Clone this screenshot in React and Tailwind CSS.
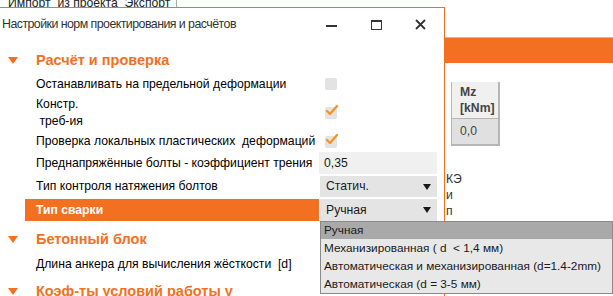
import React from 'react'

const ORANGE = '#f37021'

const Tri = () => (
  <svg width="10" height="7" viewBox="0 0 10 7" className="block">
    <path d="M0 0 H10 L5 7 Z" fill={ORANGE} />
  </svg>
)

const Check = ({ checked }) => (
  <div className="relative w-[12px] h-[12px] rounded-[2px] bg-[#e3e3e3]">
    {checked && (
      <svg width="14" height="12" viewBox="0 0 14 12" className="absolute left-[0px] top-[-3px]">
        <path d="M2 7 L5 10 L12 2" stroke="#f7931e" strokeWidth="2.2" fill="none" strokeLinecap="round" strokeLinejoin="round" />
      </svg>
    )}
  </div>
)

const Arrow = () => (
  <svg width="8" height="6" viewBox="0 0 8 6" className="block">
    <path d="M0 0 H8 L4 6 Z" fill="#1a1a1a" />
  </svg>
)

const Section = ({ title, className = '' }) => (
  <div className={`flex items-center h-[26px] ${className}`}>
    <div className="w-[36px] pl-[8px]"><Tri /></div>
    <span className="text-[14.5px] font-bold text-[#f37021] whitespace-nowrap">{title}</span>
  </div>
)

const Row = ({ label, h = 'h-[20px]', children, active }) => (
  <div className={`flex items-center ${h}`}>
    <div className={`flex items-center ml-[25px] pl-[11px] w-[294px] self-stretch whitespace-pre ${active ? 'bg-[#f37021] text-white font-bold' : 'text-black'}`}>
      {label}
    </div>
    <div className="w-[118px] flex items-center self-stretch">{children}</div>
  </div>
)

const Select = ({ value }) => (
  <div className="flex items-center justify-between w-[117px] h-full ml-[1px] pl-[6px] pr-[6px] bg-[#e4e4e4] text-[#1a1a1a]">
    <span>{value}</span>
    <Arrow />
  </div>
)

export default function App() {
  return (
    <div className="relative w-[613px] h-[296px] overflow-hidden bg-white text-[12.2px] leading-[17px]" style={{ fontFamily: '"Liberation Sans", Arial, sans-serif' }}>
      {/* background app */}
      <div className="flex flex-col">
        <div className="h-[7px] overflow-hidden relative">
          <div className="flex items-end h-[7px] text-[#222] pl-[8px]">
            <span className="whitespace-pre leading-[13px] mb-[-3px]">Импорт  из проекта  Экспорт</span>
          </div>
          <div className="absolute left-[176px] top-0 w-[1px] h-[7px] bg-[#aaa]" />
        </div>
        <div className="h-[30px]" />
        <div className="h-[1px] bg-[#bdbdbd]" />
        <div className="h-[25px] bg-[#f37021]" />
        <div className="h-[19px]" />
        <div className="ml-[451px] w-[49px] border-r-2 border-b-2 border-[#b5b5b5] text-[#444]">
          <div className="bg-[#f0f0f0] px-[8px] pt-[2px] pb-[2px] font-bold leading-[16px] border-l border-[#b5b5b5]">Mz<br />[kNm]</div>
          <div className="bg-[#e0e0e0] px-[8px] h-[26px] flex items-center border-t border-l border-[#b5b5b5]">0,0</div>
        </div>
        <div className="ml-[446px] mt-[25px] text-[#333] leading-[16px]">
          <div>КЭ</div>
          <div>и</div>
          <div>п</div>
        </div>
        <div className="mt-[6px] h-[10px] bg-[#a9a9a9]" />
      </div>

      {/* dialog window */}
      <div className="absolute left-0 top-[7px] w-[445px] h-[300px] bg-white border-t border-r border-[#f37021] flex flex-col">
        <div className="flex items-center h-[33px]">
          <span className="pl-[2px] text-[#333] text-[12.4px] tracking-[-0.55px] flex-1 whitespace-nowrap">Настройки норм проектирования и расчётов</span>
          <div className="flex items-center">
            <div className="w-[45px] flex justify-center"><div className="w-[11px] h-[2px] bg-[#333] mt-[2px]" /></div>
            <div className="w-[45px] flex justify-center"><div className="w-[11px] h-[10px] border border-[#333] border-t-2" /></div>
            <div className="w-[45px] flex justify-center pr-[3px]">
              <svg width="11" height="11" viewBox="0 0 11 11"><path d="M1 1 L10 10 M10 1 L1 10" stroke="#333" strokeWidth="1.8" /></svg>
            </div>
          </div>
        </div>
        <Section title="Расчёт и проверка" className="mt-[6px]" />
        <Row label="Останавливать на предельной деформации" h="h-[22px]">
          <div className="pl-[6px]"><Check /></div>
        </Row>
        <Row label={<span>Констр.<br /> треб-ия</span>} h="h-[36px]">
          <div className="pl-[6px]"><Check checked /></div>
        </Row>
        <Row label="Проверка локальных пластических  деформаций" h="h-[21px]">
          <div className="pl-[6px]"><Check checked /></div>
        </Row>
        <Row label="Преднапряжённые болты - коэффициент трения" h="h-[22px]">
          <div className="w-[118px] h-full bg-[#f0f0f0] pl-[5px] flex items-center text-[#1a1a1a]">0,35</div>
        </Row>
        <div className="h-[2px]" />
        <Row label="Тип контроля натяжения болтов" h="h-[21px]">
          <Select value="Статич." />
        </Row>
        <div className="h-[2px]" />
        <Row label="Тип сварки" h="h-[22px]" active>
          <Select value="Ручная" />
        </Row>
        <Section title="Бетонный блок" className="mt-[5px]" />
        <Row label="Длина анкера для вычисления жёсткости  [d]" h="h-[24px]" />
        <Section title="Коэф-ты условий работы γ" className="mt-[2px]" />
      </div>

      {/* open dropdown */}
      <div className="absolute left-[320px] top-[221px] w-[293px] bg-[#e8e8e8] border border-[#8a8a8a] text-[#1a1a1a] text-[11.8px] whitespace-pre">
        <div className="h-[17px] bg-[#a9a9a9] pl-[3px] flex items-center">Ручная</div>
        <div className="h-[18px] pl-[3px] flex items-center">Механизированная ( d  &lt; 1,4 мм)</div>
        <div className="h-[18px] pl-[3px] flex items-center">Автоматическая и механизированная (d=1.4-2mm)</div>
        <div className="h-[18px] pl-[3px] flex items-center">Автоматическая (d = 3-5 мм)</div>
      </div>
    </div>
  )
}
